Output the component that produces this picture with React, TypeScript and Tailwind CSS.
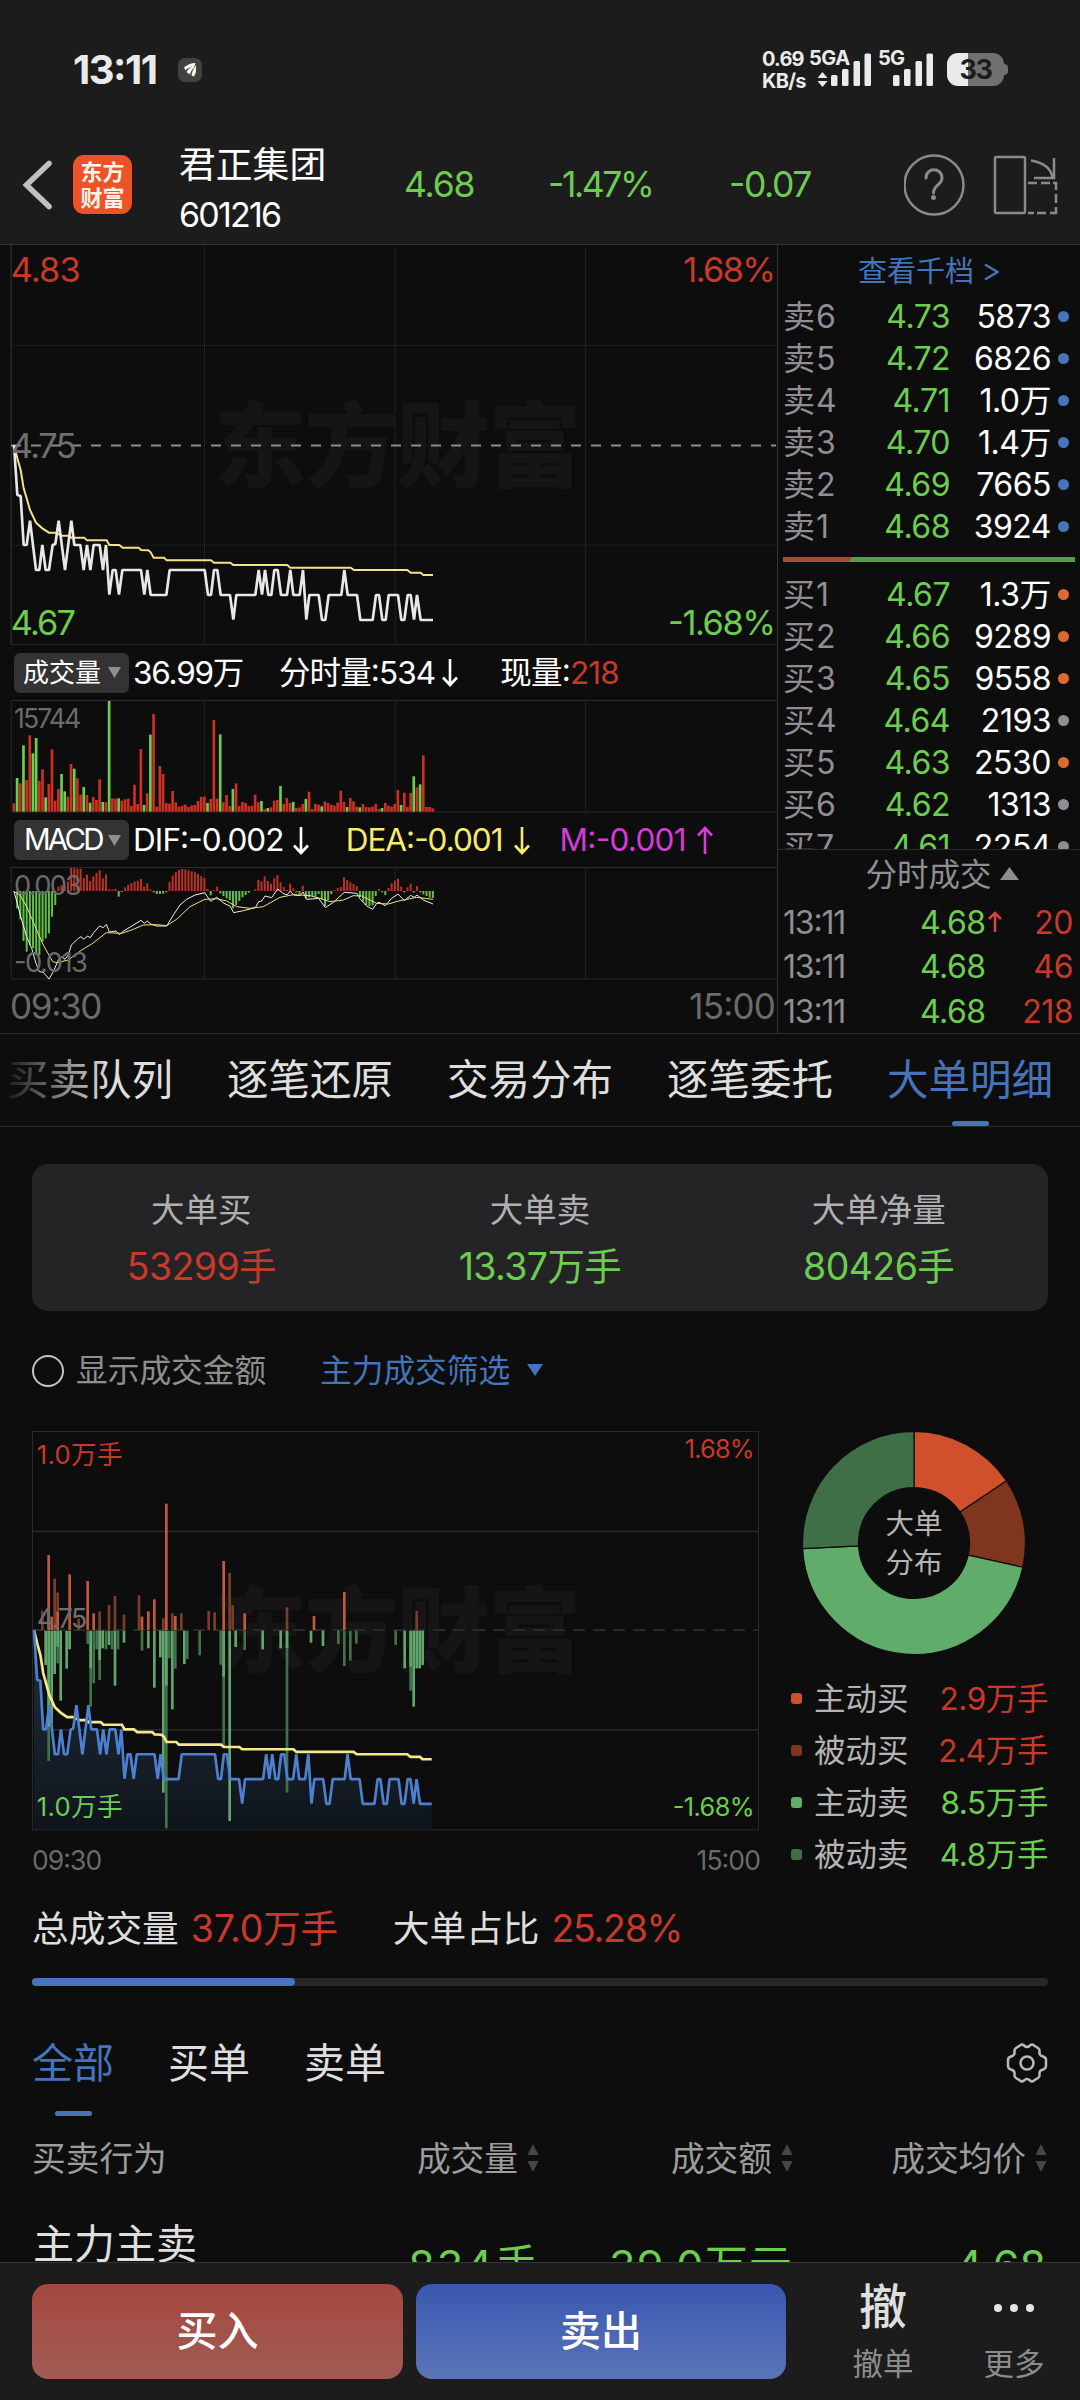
import React, { useState } from 'react';

const RED = '#c8382b';
const GREEN = '#6ccd50';

const asks = [
	['卖6', '4.73', '5873'],
	['卖5', '4.72', '6826'],
	['卖4', '4.71', '1.0万'],
	['卖3', '4.70', '1.4万'],
	['卖2', '4.69', '7665'],
	['卖1', '4.68', '3924'],
];

const bids = [
	['买1', '4.67', '1.3万', 'bg-[#dd6a33]'],
	['买2', '4.66', '9289', 'bg-[#dd6a33]'],
	['买3', '4.65', '9558', 'bg-[#dd6a33]'],
	['买4', '4.64', '2193', 'bg-[#8e8e95]'],
	['买5', '4.63', '2530', 'bg-[#dd6a33]'],
	['买6', '4.62', '1313', 'bg-[#8e8e95]'],
	['买7', '4.61', '2254', 'bg-[#8e8e95]'],
];

const trades = [
	{ time: '13:11', price: '4.68', up: true, qty: '20' },
	{ time: '13:11', price: '4.68', up: false, qty: '46' },
	{ time: '13:11', price: '4.68', up: false, qty: '218' },
];

// chart data is kept in device units, 3 per css pixel
const price: number[][] = [
	[42, 615], [52, 765], [62, 768], [71, 915], [80, 915], [90, 842], [108, 990], [118, 990], [127, 915],
	[137, 990], [147, 990], [158, 915], [166, 912], [176, 842], [195, 990], [214, 842], [223, 915], [241, 915],
	[251, 990], [261, 915], [271, 990], [281, 915], [299, 915], [309, 990], [318, 915], [328, 1064], [338, 990],
	[347, 990], [357, 1064], [367, 990], [423, 990], [433, 1064], [442, 990], [452, 1065], [499, 1065], [509, 990],
	[614, 990], [624, 1065], [633, 1065], [642, 990], [652, 990], [662, 1065], [690, 1065], [700, 1139], [709, 1065],
	[766, 1065], [776, 990], [786, 1064], [795, 990], [805, 1065], [814, 1065], [823, 990], [833, 990], [843, 1065],
	[861, 1065], [871, 990], [880, 1065], [899, 1065], [909, 990], [919, 1139], [928, 1065], [956, 1065], [966, 1140],
	[976, 1140], [986, 1065], [1024, 1065], [1033, 990], [1043, 1065], [1071, 1065], [1081, 1140], [1118, 1140],
	[1128, 1065], [1137, 1065], [1147, 1140], [1157, 1140], [1166, 1065], [1194, 1065], [1204, 1140], [1213, 1140],
	[1223, 1065], [1232, 1065], [1242, 1139], [1251, 1065], [1262, 1140], [1299, 1140],
];

const average: number[][] = [
	[42, 615], [52, 655], [62, 690], [71, 745], [80, 775], [90, 810], [108, 848], [127, 865], [147, 878], [166, 878],
	[185, 887], [208, 887], [214, 893], [253, 893], [261, 901], [320, 901], [328, 915], [358, 915], [368, 923],
	[416, 923], [423, 930], [445, 931], [452, 937], [461, 953], [492, 953], [500, 961], [633, 961], [642, 968],
	[691, 968], [700, 975], [862, 975], [871, 983], [1052, 983], [1062, 990], [1222, 990], [1232, 998], [1262, 998],
	[1270, 1005], [1299, 1005],
];

// one bar a minute, negative is green
const volume = [
	25, -101, 85, -199, 95, 229, -175, -221, 92, 127, -43, 83, 187, 33, 68, -113, -61, 45, 143, -129, 100, 51, -74, 50,
	-27, 44, 35, 97, -29, 29, -332, 40, 39, -40, 33, 37, 39, 17, 81, 23, 188, -20, 55, -231, 293, 15, 137, 113, 26, 24,
	62, 28, 15, 18, 21, 14, 19, 20, 32, 45, 45, -26, 38, 275, 39, -232, 28, 50, 17, -68, 85, 17, 29, 26, 17, 18, 51, 28,
	-32, 8, -11, 13, 33, 35, -77, 23, 41, 26, -29, 11, 13, 23, -38, 60, 8, 23, 21, -16, 31, 26, 21, 18, 27, 63, 29, -14,
	41, 31, 15, -13, 23, 14, 13, 15, 23, 8, -11, 26, 18, 15, 23, 65, -20, 57, 15, 56, -106, 73, -82, 169, 14, 14, 10,
];

const macd = [
	-2, -52, -85, -150, -182, -162, -172, -187, -192, -152, -142, -127, -77, -42, 13, 18, 15, 28, 69, 69, 67, 67, 39, 49,
	30, 44, 54, 62, 38, 50, 5, 5, 7, -17, -3, 11, 19, 23, 28, 31, 36, 13, 23, 5, -4, -9, -9, -8, -4, 27, 46, 57, 63, 66,
	65, 62, 59, 56, 51, 45, 39, 6, -13, 3, 13, -7, -15, -22, -27, -52, -42, -30, -19, -12, -5, 0, 5, 33, 29, 44, 30, 22,
	38, 48, 26, 12, 3, 22, 8, -4, -10, 16, -22, -19, -15, -17, -9, -25, -45, -27, -9, 3, 9, 12, 42, 33, 26, 21, 15, -17,
	-32, -42, -45, -43, -15, 6, -4, -12, 9, 23, 31, 37, 13, -4, 11, 22, -4, 15, -4, -10, -15, -20, -21,
];

const dif =
	'42,755 52,790 62,830 80,890 95,925 108,970 118,995 130,997 147,1017 160,995 175,960 185,950 195,958 205,945 214,915 224,906 235,895 243,890 252,898 262,888 271,893 281,878 299,858 310,863 319,853 328,876 348,873 358,884 368,875 423,841 433,850 442,843 452,852 470,858 500,858 520,825 540,795 560,778 585,765 614,758 632,784 650,772 672,790 690,798 701,818 730,812 766,803 776,785 785,783 795,768 815,773 833,747 852,762 862,764 871,753 881,765 900,767 909,756 920,778 956,775 976,803 1000,787 1033,757 1071,760 1081,778 1100,798 1118,808 1130,790 1137,787 1156,797 1175,775 1194,762 1213,782 1232,766 1242,772 1251,765 1270,780 1299,792';
const dea =
	'42,755 60,765 80,800 110,870 130,915 158,965 170,968 205,960 245,930 275,912 319,878 365,880 400,868 430,855 470,854 500,857 530,838 570,800 614,778 650,776 680,783 710,800 750,805 790,800 840,772 880,764 930,767 960,775 990,785 1030,780 1060,767 1085,768 1130,790 1165,792 1200,782 1250,772 1299,778';

// [x, end y, active order]
const bigBuys: number[][] = [
	[127, 632, 0], [146, 465, 1], [155, 650, 1], [164, 536, 0], [173, 578, 0], [173, 635, 1], [209, 523, 1],
	[236, 655, 0], [263, 543, 1], [281, 640, 1], [299, 634, 0], [327, 615, 0], [345, 588, 0], [372, 644, 0],
	[417, 586, 0], [426, 650, 1], [445, 634, 1], [463, 598, 1], [490, 655, 0], [499, 311, 1], [517, 640, 0],
	[526, 648, 1], [544, 640, 0], [626, 633, 0], [644, 637, 0], [671, 483, 1], [689, 519, 0], [698, 615, 0],
	[734, 640, 1], [861, 622, 0], [942, 648, 1], [1033, 576, 1], [1250, 633, 0],
];

const bigSells: number[][] = [
	[137, 795, 1], [146, 1083, 0], [146, 980, 1], [155, 970, 1], [164, 822, 1], [173, 790, 0], [173, 740, 1],
	[182, 902, 1], [200, 806, 1], [209, 748, 1], [263, 732, 0], [272, 920, 0], [272, 805, 1], [281, 850, 0],
	[290, 748, 0], [299, 840, 0], [299, 780, 1], [308, 745, 1], [318, 748, 0], [327, 735, 1], [336, 748, 0],
	[345, 857, 1], [354, 748, 0], [372, 728, 1], [426, 752, 0], [445, 745, 1], [463, 863, 1], [481, 772, 1],
	[490, 1178, 1], [499, 1285, 0], [499, 857, 1], [508, 775, 0], [517, 928, 1], [526, 806, 0], [553, 792, 1],
	[562, 777, 0], [599, 766, 0], [662, 794, 0], [671, 1040, 0], [671, 830, 1], [689, 1263, 1], [707, 741, 1],
	[734, 750, 0], [788, 748, 1], [842, 745, 1], [861, 1178, 0], [861, 744, 1], [933, 728, 1], [969, 738, 1],
	[1015, 732, 0], [1033, 798, 0], [1051, 782, 0], [1069, 731, 0], [1187, 735, 0], [1214, 805, 1],
	[1232, 872, 0], [1232, 800, 1], [1241, 920, 1], [1250, 805, 1], [1259, 805, 1], [1268, 795, 1],
];

const toPoints = (list: number[][]) => list.map((p) => p.join(',')).join(' ');
const toBigOrder = (list: number[][]) =>
	list.map(([x, y]) => [102 + (x - 42) * 0.9492, 690 + (y - 615) * 0.994]);

const barX = (i: number) => 42 + i * 9.52;

type LabelProps = {
	x: number;
	y: number;
	size: number;
	length: number;
	fill: string;
	children: string;
};

const Label = ({ x, y, size, length, fill, children }: LabelProps) => (
	<text x={x} y={y} fontSize={size} textLength={length} fill={fill}>
		{children}
	</text>
);

const Watermark = ({ y }: { y: number }) => (
	<text x={640} y={y} fontSize={280} textLength={1104} fontWeight={900} fill="#151515">
		东方财富
	</text>
);

const VerticalGrid = ({ y1, y2 }: { y1: number; y2: number }) => (
	<g stroke="#333" strokeWidth={3} strokeDasharray="3 3">
		<path d={`M613.500 ${y1}V${y2}M1185.500 ${y1}V${y2}M1756.500 ${y1}V${y2}`} />
	</g>
);

const Signal = () => (
	<svg className="h-[34px] w-[41px]" viewBox="0 0 41 34" fill="#eaeaea">
		<rect x="0" y="22" width="6.500" height="11" rx="1.500" />
		<rect x="11" y="16" width="6.500" height="17" rx="1.500" />
		<rect x="22.500" y="8" width="6.500" height="25" rx="1.500" />
		<rect x="33.500" y="0.500" width="6.500" height="32.500" rx="1.500" />
	</svg>
);

const StatusBar = () => (
	<div className="flex h-[140px] pt-[50px]">
		<span className="ml-[73px] w-[105px] text-[40px] font-bold leading-[40px] tracking-[-1.5px] text-[#eaeaea]">
			13:11
		</span>
		<svg className="mt-[8px] h-6 w-6" viewBox="0 0 24 24">
			<rect width="24" height="24" rx="7" fill="#424242" />
			<path d="M6 9.500C9 7 13 5 17.500 5L15 8C12 9 9 10.500 7.500 12.500Z" fill="#fff8ec" />
			<path d="M8.500 14C10.500 11 13.500 8 17.500 5.500L15.500 10.500C13.500 12 12.500 14 12 16.500Z" fill="#fff8ec" />
			<path d="M13.500 17.500C14 14 15.500 10.500 18 7V14L16 18.500Z" fill="#fff8ec" />
		</svg>
		<div className="ml-[560px] flex w-[47px] flex-col text-[20px] font-bold leading-[22px] tracking-[-0.7px] text-[#eaeaea]">
			<span className="-mt-[2px] h-[22px] tracking-[-0.8px]">0.69</span>
			<span className="h-[22px]">KB/s</span>
		</div>
		<div className="relative w-[63px] text-[20px] font-bold leading-[16px] text-[#eaeaea]">
			<span className="tracking-[-0.5px]">5GA</span>
			<svg className="absolute left-[8px] top-[22px] h-[15px] w-[11px]" viewBox="0 0 11 15" fill="#eaeaea">
				<path d="M5.500 0L10.500 6H0.500ZM5.500 15L10.500 9H0.500Z" />
			</svg>
			<div className="absolute left-[22px] top-[3px]">
				<Signal />
			</div>
		</div>
		<div className="relative ml-[6px] w-[62px] text-[20px] font-bold leading-[16px] text-[#eaeaea]">
			<span className="tracking-[-0.9px]">5G</span>
			<div className="absolute left-[15px] top-[3px]">
				<Signal />
			</div>
		</div>
		<div className="relative ml-[7px] mt-[3px] h-[33px] w-[57px]">
			<div className="absolute -right-1 top-[11px] h-[11px] w-2 rounded-r-[4px] bg-[#707070]" />
			<div className="relative flex h-[33px] w-[57px] items-center justify-center overflow-hidden rounded-[11px] bg-gradient-to-r from-[#eaeaea] from-[36%] to-[#707070] to-[36%] text-[27px] font-bold leading-none tracking-[-1.5px] text-[#1c1c1c]">
				33
			</div>
		</div>
	</div>
);

const StockHeader = () => (
	<div className="flex h-[90px]">
		<svg className="ml-[20px] h-[90px] w-[36px]" viewBox="20 140 36 90" fill="none">
			<path d="M49 163.500L26.500 185L49 206.500" stroke="#c0c0c0" strokeWidth="5.600" strokeLinecap="round" />
		</svg>
		<div className="ml-[17px] mt-[15px] flex h-[59px] w-[59px] flex-col items-center justify-center rounded-[11px] bg-[#ec5428] text-[22px] font-bold leading-[26px] text-[#fff3ea]">
			<span>东方</span>
			<span>财富</span>
		</div>
		<div className="ml-[47px] flex w-[225px] flex-col text-white">
			<span className="text-[36.800px] leading-[49px]">君正集团</span>
			<span className="text-[34px] leading-[52px] tracking-[-1.800px]">601216</span>
		</div>
		<div className="flex w-[500px] pt-[20px] text-[35.500px] leading-[50px] text-[#6ccd50]">
			<span className="w-[144px] tracking-[-1.2px]">4.68</span>
			<span className="w-[181px] tracking-[-2.4px]">-1.47%</span>
			<span className="tracking-[-1.4px]">-0.07</span>
		</div>
		<svg className="h-[90px] w-[176px]" viewBox="904 140 176 90" fill="none" stroke="#8a8a8a" strokeWidth="2.500">
			<circle cx="934" cy="185" r="29.500" />
			<path d="M926 178c0-11 16-11 16 0c0 7-8.500 7-8.500 15" strokeWidth="3" strokeLinecap="round" />
			<circle cx="933.500" cy="197.500" r="2.500" fill="#8a8a8a" stroke="none" />
			<rect x="995" y="157" width="30" height="56" rx="1.500" />
			<path d="M1031 160.500C1045 163 1051.500 169 1052.500 178M1054 158V178H1034" />
			<path d="M1028 183h9M1041 183h9M1053 183h3v7M1056 194v9M1056 207v6h-6M1046 213h-9M1034 213h-6" />
		</svg>
	</div>
);

const Pill = ({ children }: { children: string }) => (
	<div className="ml-[14px] mr-[4px] flex h-[40px] w-[115px] items-center justify-between rounded-[6px] bg-[#333334] pl-[10px] pr-[8px]">
		<span className={children === 'MACD' ? 'text-[29.500px] tracking-[-2.8px]' : '-ml-[1px] text-[26px]'}>{children}</span>
		<svg className="h-[11px] w-[13px] shrink-0" viewBox="0 0 13 11">
			<path d="M0 0H13L6.500 11Z" fill="#8e8e95" />
		</svg>
	</div>
);

const Arrow = ({ up = false }: { up?: boolean }) => (
	<svg
		className={up ? 'h-[29px] w-[16px] rotate-180' : 'h-[29px] w-[16px]'}
		viewBox="0 0 16 29"
		fill="none"
		stroke="currentColor"
		strokeWidth="2.600"
	>
		<path d="M8 1V27M1 19.500L8 27L15 19.500" />
	</svg>
);

const Minute = () => (
	<div className="flex h-[788px] w-[777px] flex-col">
		<svg className="h-[400px] w-[777px]" viewBox="0 15 2331 1200" fill="none">
			<Watermark y={720} />
			<path d="M33.500 15V1214.500H2331" stroke="#2c2c2c" strokeWidth={4} />
			<VerticalGrid y1={18} y2={1212} />
			<path d="M36 316.500H2328M36 915.500H2328" stroke="#2a2a2a" strokeWidth={3} strokeDasharray="3 3" />
			<path d="M33 616.500H2328" stroke="#8c8c8c" strokeWidth={6} strokeDasharray="30 30" />
			<polyline points={toPoints(average)} stroke="#f2e38b" strokeWidth={6} />
			<polyline points={toPoints(price)} stroke="#e8e8e8" strokeWidth={8} strokeLinejoin="bevel" />
			<Label x={32} y={126} size={103} length={210} fill={RED}>4.83</Label>
			<Label x={32} y={654} size={103} length={198} fill="#6f6f6f">4.75</Label>
			<Label x={32} y={1185} size={103} length={196} fill={GREEN}>4.67</Label>
			<Label x={2050} y={126} size={103} length={278} fill={RED}>1.68%</Label>
			<Label x={2004} y={1185} size={103} length={324} fill={GREEN}>-1.68%</Label>
		</svg>
		<div className="flex h-[55px] items-center text-[31.500px] leading-none">
			<Pill>成交量</Pill>
			<span className="w-[146px] tracking-[-1.2px]">36.99万</span>
			<span className="tracking-[-0.900px]">分时量:534</span>
			<span className="ml-[7px] mr-[42px] flex"><Arrow /></span>
			<span className="tracking-[-0.800px]">现量:<span className="text-[#c8382b]">218</span></span>
		</div>
		<svg className="h-[113px] w-[777px]" viewBox="0 180 2331 339" fill="none">
			<path d="M2331 181.500H33.500V516H2331" stroke="#2a2a2a" strokeWidth={3} />
			<VerticalGrid y1={183} y2={514} />
			<Label x={42} y={264} size={80} length={202} fill="#6a6a6a">15744</Label>
			{volume.map((v, i) => (
				<rect key={i} x={barX(i) - 4.2} y={515 - Math.abs(v)} width={8} height={Math.abs(v)} fill={v > 0 ? '#cc3022' : GREEN} />
			))}
		</svg>
		<div className="flex h-[54px] items-center text-[31.500px] leading-none">
			<Pill>MACD</Pill>
			<span className="tracking-[-0.900px]">DIF:-0.002</span>
			<span className="ml-[9px] mr-[37px] flex"><Arrow /></span>
			<span className="tracking-[-1px] text-[#f7ea6e]">DEA:-0.001</span>
			<span className="ml-[11px] mr-[30px] flex text-[#f7ea6e]"><Arrow /></span>
			<span className="tracking-[-0.700px] text-[#d63bd6]">M:-0.001</span>
			<span className="ml-[11px] flex text-[#d63bd6]"><Arrow up /></span>
		</div>
		<svg className="h-[113px] w-[777px]" viewBox="0 681 2331 339" fill="none">
			<path d="M2331 682.500H33.500V1017H2331" stroke="#2a2a2a" strokeWidth={3} />
			<VerticalGrid y1={684} y2={1016} />
			{macd.map((v, i) => (
				<rect key={i} x={barX(i) - 3} y={v > 0 ? 753 - v : 753} width={6} height={Math.abs(v)} fill={v > 0 ? '#b93325' : '#5fc044'} />
			))}
			<polyline points={dif} stroke="#f0f0f0" strokeWidth={3} />
			<polyline points={dea} stroke="#efe07a" strokeWidth={3} />
			<Label x={42} y={765} size={82} length={204} fill="#6a6a6a">0.003</Label>
			<Label x={42} y={996} size={82} length={222} fill="#6a6a6a">-0.013</Label>
		</svg>
		<div className="flex h-[53px] items-center justify-between pl-[10px] pr-[2px] text-[35px] leading-none text-[#6a6a6a]">
			<span className="tracking-[-1.300px]">09:30</span>
			<span className="tracking-[-0.800px]">15:00</span>
		</div>
	</div>
);

const Quote = ({ row, dot }: { row: string[]; dot: string }) => (
	<div className="flex h-[42px] shrink-0 items-center text-[32px] leading-none">
		<span className="w-[70px] text-[#8e8e93]">
			{row[0][0]}
			<span className="ml-[1px]">{row[0][1]}</span>
		</span>
		<span className="w-[97px] text-right tracking-[-0.5px] text-[#6ccd50]">{row[1]}</span>
		<span className="w-[101px] text-right tracking-[-0.5px] text-white">{row[2]}</span>
		<span className={`-mt-[2px] ml-[7px] h-[11px] w-[11px] rounded-full ${dot}`} />
	</div>
);

const OrderBook = () => (
	<div className="flex h-[788px] w-[303px] flex-col border-l border-[#333]">
		<div className="flex h-[605px] flex-col overflow-hidden border-b border-[#2c2c2c] pl-[5px]">
			<div className="flex h-[51px] shrink-0 items-center justify-center pr-[6px] pt-[2px] text-[29px] leading-none text-[#4574ba]">
				查看千档
				<svg className="ml-[10px] h-[18px] w-[15px]" viewBox="0 0 15 18" fill="none">
					<path d="M1 1.500L13.500 9L1 16.500" stroke="#4574ba" strokeWidth="2.200" />
				</svg>
			</div>
			{asks.map((row) => (
				<Quote key={row[0]} row={row} dot="bg-[#4574ba]" />
			))}
			<svg className="mb-[11px] mt-[9px] h-[5px] w-[292px] shrink-0" viewBox="0 0 292 5">
				<path d="M0 0H69L65 5H0Z" fill="#b1443c" />
				<path d="M69 0H292V5H65Z" fill="#549f3e" />
			</svg>
			<div className="h-[1px] shrink-0" />
			{bids.map((row) => (
				<Quote key={row[0]} row={row} dot={row[3]} />
			))}
		</div>
		<div className="flex h-[50px] items-center justify-center pl-[26px] text-[31.500px] leading-none text-[#8e8e93]">
			分时成交
			<svg className="-mt-[3px] ml-[8px] h-[13px] w-[19px]" viewBox="0 0 19 13">
				<path d="M9.500 0L19 13H0Z" fill="#8e8e93" />
			</svg>
		</div>
		{trades.map((t, i) => (
			<div key={i} className="flex h-[44.500px] items-center pl-[5px] pt-[2px] text-[32px] leading-none">
				<span className="w-[137px] tracking-[-1.200px] text-[#8e8e93]">{t.time}</span>
				<span className="w-[65px] text-right tracking-[-0.500px] text-[#6ccd50]">{t.price}</span>
				<span className="w-[18px] pl-[3px]">
					{t.up && (
						<svg className="-mt-[3px] h-[21px] w-[14px]" viewBox="0 0 14 21" fill="none" stroke="#d8453a" strokeWidth="2.500">
							<path d="M7 21V2M1 8L7 2L13 8" />
						</svg>
					)}
				</span>
				<span className="w-[70px] text-right tracking-[-0.500px] text-[#c8382b]">{t.qty}</span>
			</div>
		))}
	</div>
);

const tabs = ['买卖队列', '逐笔还原', '交易分布', '逐笔委托', '大单明细'];

const Tabs = () => {
	const [active, setActive] = useState<string>('大单明细');

	return (
		<ul className="relative flex h-[93px] gap-x-[54px] overflow-hidden border-b border-[#2c2c2c] pl-[7px] text-[41.500px] leading-[92px] text-[#dedede]">
			{tabs.map((tab) => (
				<li
					key={tab}
					onClick={() => setActive(tab)}
					className={tab === active ? 'relative w-[166px] shrink-0 text-[#4574ba]' : 'relative w-[166px] shrink-0'}
				>
					{tab}
					{tab === active && (
						<span className="absolute bottom-0 left-[65px] h-[5px] w-[37px] rounded-[3px] bg-[#4574ba]" />
					)}
				</li>
			))}
			<div className="absolute left-0 top-0 h-full w-[110px] bg-gradient-to-r from-[#0d0d0d] to-transparent" />
		</ul>
	);
};

const summary = [
	{ title: '大单买', value: '53299手', color: 'text-[#c8382b]' },
	{ title: '大单卖', value: '13.37万手', color: 'text-[#6ccd50]' },
	{ title: '大单净量', value: '80426手', color: 'text-[#6ccd50]' },
];

const BigOrderChart = () => (
	<div className="w-[728px]">
		<svg className="h-[400px] w-[728px]" viewBox="96 93 2184 1200" fill="none">
			<defs>
				<linearGradient id="area" x1="0" y1="0" x2="0" y2="1">
					<stop offset="0" stopColor="#1f2f3d" />
					<stop offset="1" stopColor="#10151c" />
				</linearGradient>
			</defs>
			<Watermark y={794} />
			<rect x={97.5} y={94.5} width={2178} height={1195} stroke="#2a2a2a" strokeWidth={3} />
			<path d="M99 394H2275M99 989.500H2275" stroke="#262626" strokeWidth={5} />
			<path d="M99 690.500H2275" stroke="#2c2c2c" strokeWidth={5} strokeDasharray="36 24" />
			<polygon points={`${toPoints(toBigOrder(price))} 1295,1286 102,1286`} fill="url(#area)" />
			{bigBuys.map(([x, y, on], i) => (
				<rect key={i} x={x - 4} y={y} width={8} height={690 - y} fill={on ? '#bf5a3d' : '#7b3d29'} />
			))}
			{bigSells.map(([x, y, on], i) => (
				<rect key={i} x={x - 4} y={692} width={8} height={y - 692} fill={on ? '#62a56d' : '#41704a'} />
			))}
			<polyline points={toPoints(toBigOrder(average))} stroke="#f4e78c" strokeWidth={8} />
			<polyline points={toPoints(toBigOrder(price))} stroke="#4d80d0" strokeWidth={8} strokeLinejoin="bevel" />
			<Label x={110} y={192} size={77} length={258} fill={RED}>1.0万手</Label>
			<Label x={110} y={684} size={80} length={152} fill="#6f6f6f">4.75</Label>
			<Label x={110} y={1248} size={77} length={258} fill={GREEN}>1.0万手</Label>
			<Label x={2054} y={173} size={76} length={210} fill={RED}>1.68%</Label>
			<Label x={2018} y={1247} size={76} length={246} fill={GREEN}>-1.68%</Label>
		</svg>
		<div className="flex h-[58px] items-center justify-between text-[26.500px] leading-none tracking-[-0.900px] text-[#6a6a6a]">
			<span>09:30</span>
			<span>15:00</span>
		</div>
	</div>
);

const slices = [
	{ name: '主动买', value: 2.9, fill: '#d1502c', box: 'bg-[#d1502c]', color: 'text-[#c8382b]' },
	{ name: '被动买', value: 2.4, fill: '#80351e', box: 'bg-[#80351e]', color: 'text-[#c8382b]' },
	{ name: '主动卖', value: 8.5, fill: '#5fac6b', box: 'bg-[#5fac6b]', color: 'text-[#6ccd50]' },
	{ name: '被动卖', value: 4.8, fill: '#3f6f46', box: 'bg-[#3f6f46]', color: 'text-[#6ccd50]' },
];

const slicePath = (index: number) => {
	const total = slices.reduce((sum, s) => sum + s.value, 0);
	const before = slices.slice(0, index).reduce((sum, s) => sum + s.value, 0);
	const from = (before / total) * Math.PI * 2;
	const to = ((before + slices[index].value) / total) * Math.PI * 2;
	const at = (r: number, a: number) => `${112 + r * Math.sin(a)} ${112 - r * Math.cos(a)}`;
	const large = to - from > Math.PI ? 1 : 0;
	return `M${at(111.5, from)}A111.500 111.500 0 ${large} 1 ${at(111.5, to)}L${at(55.5, to)}A55.500 55.500 0 ${large} 0 ${at(55.5, from)}Z`;
};

const Distribution = () => (
	<div className="w-[288px]">
		<div className="relative ml-[42px] h-[224px] w-[224px]">
			<svg className="h-[224px] w-[224px]" viewBox="0 0 224 224">
				{slices.map((s, i) => (
					<path key={s.name} d={slicePath(i)} fill={s.fill} stroke="#0d0d0d" strokeWidth="1.200" />
				))}
			</svg>
			<div className="absolute inset-0 flex flex-col items-center justify-center text-[28.500px] leading-[39px] text-[#b4b4b4]">
				<span>大单</span>
				<span>分布</span>
			</div>
		</div>
		<ul className="mt-[18px]">
			{slices.map((s) => (
				<li key={s.name} className="flex h-[52px] items-center pl-[31px] text-[31.500px] leading-none">
					<span className={`-mt-[2px] h-[11px] w-[11px] rounded-[3px] ${s.box}`} />
					<span className="ml-[12px] text-[#b4b4b4]">{s.name}</span>
					<span className={`ml-auto tracking-[-0.400px] ${s.color}`}>{s.value}万手</span>
				</li>
			))}
		</ul>
	</div>
);

const SortIcon = () => (
	<svg className="ml-[9px] h-[28px] w-[12px]" viewBox="0 0 12 28" fill="#464646">
		<path d="M6 0L11.500 11H0.500ZM6 28L11.500 17H0.500Z" />
	</svg>
);

const OrderList = () => {
	const [filter, setFilter] = useState<string>('全部');

	return (
		<>
			<div className="flex h-[130px] px-8 text-[41px] leading-[130px] text-[#dedede]">
				{['全部', '买单', '卖单'].map((name) => (
					<span
						key={name}
						onClick={() => setFilter(name)}
						className={name === filter ? 'relative mr-[54px] text-[#4574ba]' : 'mr-[54px]'}
					>
						{name}
						{name === filter && (
							<span className="absolute bottom-[12px] left-[23px] h-[5px] w-[37px] rounded-[3px] bg-[#4574ba]" />
						)}
					</span>
				))}
				<svg className="ml-auto mt-[44px] h-[42px] w-[42px]" viewBox="0 0 42 42" fill="none" stroke="#b9b9b9" strokeWidth="2.500">
					<path d="M14 3.500Q16 1.500 18 3.500Q21 6.500 24 3.500Q26 1.500 28 3.500L32 6Q34 7.500 33.500 10Q33 13.500 37 14.500Q40 15.500 40 18V24Q40 26.500 37 27.500Q33 28.500 33.500 32Q34 34.500 32 36L28 38.500Q26 40.500 24 38.500Q21 35.500 18 38.500Q16 40.500 14 38.500L10 36Q8 34.500 8.500 32Q9 28.500 5 27.500Q2 26.500 2 24V18Q2 15.500 5 14.500Q9 13.500 8.500 10Q8 7.500 10 6Z" />
					<circle cx="21" cy="21" r="6.500" />
				</svg>
			</div>
			<div className="flex h-[61px] items-center pl-8 pr-[33px] text-[33.700px] leading-none text-[#9c9c9c]">
				<span className="w-[233px]">买卖行为</span>
				<span className="flex w-[274px] items-center justify-end">成交量<SortIcon /></span>
				<span className="flex w-[254px] items-center justify-end">成交额<SortIcon /></span>
				<span className="flex w-[254px] items-center justify-end">成交均价<SortIcon /></span>
			</div>
			<div className="flex h-[73px] overflow-hidden pl-[33px] pr-[34px] text-[41px] leading-[60px] text-[#dedede]">
				<span className="w-[235px] pt-[25px]">主力主卖</span>
				<span className="w-[272px] pt-[46px] text-right text-[43px] tracking-[1.800px] text-[#6ccd50]">834手</span>
				<span className="w-[254px] pt-[46px] text-right text-[43px] tracking-[1.300px] text-[#6ccd50]">39.0万元</span>
				<span className="w-[253px] pt-[46px] text-right text-[43px] text-[#6ccd50]">4.68</span>
			</div>
		</>
	);
};

const BottomBar = () => (
	<div className="flex h-[138px] border-t border-[#333] bg-[#1c1c1c] pl-8 pt-[21px]">
		<button className="h-[95px] w-[371px] rounded-[16px] bg-gradient-to-b from-[#a4473f] to-[#a05b55] text-[41px] font-medium text-white">
			买入
		</button>
		<button className="ml-[13px] h-[95px] w-[370px] rounded-[16px] bg-gradient-to-b from-[#3957b0] to-[#5b74b6] text-[41px] font-medium text-white">
			卖出
		</button>
		<div className="flex w-[194px] flex-col items-center text-[30.500px] leading-none text-[#8c8c8c]">
			<span className="h-[65px] text-[48px] font-medium leading-[46px] text-[#dedede]">撤</span>
			<span>撤单</span>
		</div>
		<div className="flex w-[68px] flex-col items-center text-[30.500px] leading-none text-[#8c8c8c]">
			<svg className="h-[65px] w-[42px]" viewBox="0 0 42 65" fill="#e4e4e4">
				<circle cx="5" cy="24" r="4" />
				<circle cx="21" cy="24" r="4" />
				<circle cx="37" cy="24" r="4" />
			</svg>
			<span>更多</span>
		</div>
	</div>
);

const App = () => {
	const [showAmount, setShowAmount] = useState<boolean>(false);

	return (
		<div className="h-[2400px] w-[1080px] overflow-hidden whitespace-nowrap bg-[#0d0d0d] font-['Inter','Noto_Sans_CJK_SC',sans-serif] text-white [font-feature-settings:'case']">
			<div className="h-[245px] border-b border-[#333] bg-[#1c1c1c]">
				<StatusBar />
				<StockHeader />
			</div>
			<div className="flex h-[789px] border-b border-[#2c2c2c]">
				<Minute />
				<OrderBook />
			</div>
			<Tabs />
			<div className="mx-8 mt-[37px] flex h-[147px] rounded-[16px] bg-[#242426] pt-[27px]">
				{summary.map((item) => (
					<div key={item.title} className="flex w-1/3 flex-col items-center">
						<span className="text-[33.500px] leading-[38px] text-[#b0b0b0]">{item.title}</span>
						<span className={`mt-[15px] text-[37.500px] leading-[46px] tracking-[-0.600px] ${item.color}`}>{item.value}</span>
					</div>
				))}
			</div>
			<div className="flex h-[120px] items-center pl-8 text-[31.700px] leading-none">
				<button
					onClick={() => setShowAmount(!showAmount)}
					className={showAmount ? 'h-8 w-8 rounded-full border-[8px] border-[#4574ba]' : 'h-8 w-8 rounded-full border-2 border-[#c4c4c4]'}
				/>
				<span className="ml-[12px] w-[244px] text-[#8f8f8f]">显示成交金额</span>
				<span className="text-[#4574ba]">主力成交筛选</span>
				<svg className="-mt-[2px] ml-[17px] h-[12px] w-[16px]" viewBox="0 0 16 12">
					<path d="M0 0H16L8 12Z" fill="#4574ba" />
				</svg>
			</div>
			<div className="flex h-[459px] pl-8">
				<BigOrderChart />
				<Distribution />
			</div>
			<div className="flex h-[88px] items-center px-8 pb-[10px] text-[36.700px] leading-none text-[#dedede]">
				<span>总成交量</span>
				<span className="ml-[12px] text-[37.500px] tracking-[-0.200px] text-[#c8382b]">37.0万手</span>
				<span className="ml-[55px]">大单占比</span>
				<span className="ml-[12px] text-[37.500px] tracking-[-1.300px] text-[#c8382b]">25.28%</span>
			</div>
			<div className="mx-8 mb-[12px] h-[8px] rounded-full bg-[#262627]">
				<div className="h-[8px] w-[263px] rounded-full bg-[#4575c0]" />
			</div>
			<OrderList />
			<BottomBar />
		</div>
	);
};

export default App;
